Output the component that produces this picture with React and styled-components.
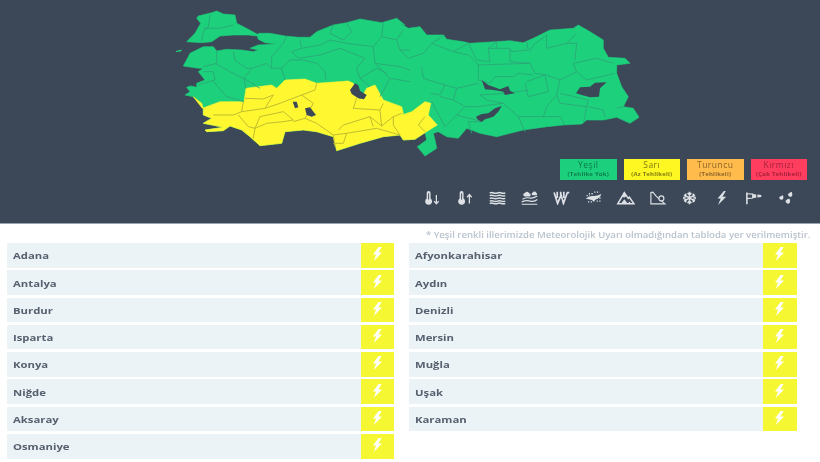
import styled, { createGlobalStyle } from "styled-components";

const GlobalStyle = createGlobalStyle`
  html, body {
    margin: 0;
    padding: 0;
    background: #fff;
    font-family: "Open Sans", "Liberation Sans", sans-serif;
  }
`;

const Page = styled.div`
  width: 820px;
  height: 462px;
  overflow: hidden;
  background: #fff;
`;

const Header = styled.header`
  height: 223px;
  background: #3c4858;
  border-bottom: 1px solid #9aa3ad;
  display: flex;
  flex-direction: column;
`;

const MapSvg = styled.svg`
  display: block;
  width: 820px;
  height: 157px;
  flex: none;
  filter: blur(0.45px);
`;

const Legend = styled.div`
  display: flex;
  justify-content: flex-end;
  gap: 7px;
  margin-top: 2px;
  padding-right: 13px;
`;

const LegendBox = styled.div`
  width: 56.5px;
  height: 20.5px;
  background: ${(p) => p.$bg};
  color: ${(p) => p.$fg};
  text-align: center;
  filter: blur(0.25px);
  b {
    display: block;
    font-weight: 400;
    font-size: 8.5px;
    letter-spacing: 0.5px;
  }
  small {
    display: block;
    font-weight: 700;
    font-size: 6px;
    letter-spacing: 0.2px;
  }
`;

const IconBar = styled.div`
  display: flex;
  justify-content: flex-end;
  margin-top: 11px;
  padding-right: 18px;
`;

const IconSlot = styled.div`
  width: 32.1px;
  height: 14px;
  display: flex;
  justify-content: center;
  color: #dde1e5;
  filter: blur(0.45px);
  svg {
    width: 19px;
    height: 14px;
    display: block;
  }
`;

const Main = styled.main`
  padding: 5px 0 0 6.5px;
`;

const Note = styled.div`
  width: 803.5px;
  text-align: right;
  font-size: 8.6px;
  line-height: 12px;
  height: 12px;
  color: #b9c3cd;
  font-weight: 600;
  margin-bottom: 2px;
  white-space: nowrap;
  transform: scaleX(1.113);
  transform-origin: right center;
  filter: blur(0.3px);
`;

const Columns = styled.div`
  display: grid;
  grid-template-columns: 387.5px 388px;
  column-gap: 14.5px;
  align-items: start;
`;

const Column = styled.div`
  display: flex;
  flex-direction: column;
  gap: 2.8px;
`;

const Row = styled.div`
  height: 24.5px;
  display: flex;
`;

const CityCell = styled.div`
  flex: 1;
  display: flex;
  align-items: center;
  background: #ebf3f7;
  padding-left: 6.5px;
`;

const CityName = styled.span`
  display: block;
  color: #56606f;
  font-size: 9.5px;
  font-weight: 700;
  margin-top: 1px;
  transform: scaleX(1.19);
  transform-origin: left center;
  filter: blur(0.25px);
`;

const WarnCell = styled.div`
  width: 33.5px;
  background: #f6f733;
  display: flex;
  align-items: center;
  justify-content: center;
  color: #fff;
  svg {
    width: 11px;
    height: 14px;
    display: block;
    margin-top: -2px;
  }
`;

const Bolt = () => (
  <svg viewBox="0 0 11 14">
    <path fill="currentColor" d="M6.6 0L1 7.6h3.1L1.8 14 10 5.6H6.4L9.6 0z" />
  </svg>
);

const icon = (children) => (
  <svg viewBox="0 0 24 18" fill="none" stroke="currentColor" strokeWidth="1.6">
    {children}
  </svg>
);

const Thermo = () => (
  <path
    fill="currentColor"
    stroke="none"
    d="M4.500 2.500a2.500 2.500 0 0 1 5 0v7.300a4.400 4.400 0 1 1-5 0z"
  />
);

const icons = [
  icon(
    <>
      <Thermo />
      <path d="M7 3v8" stroke="#3c4858" strokeWidth="1.200" />
      <path d="M17 5v11M14 13l3 3.500 3-3.500" />
    </>
  ),
  icon(
    <>
      <Thermo />
      <path d="M7 3v8" stroke="#3c4858" strokeWidth="1.200" />
      <path d="M17 16V5M14 8l3-3.500L20 8" />
    </>
  ),
  icon(
    <path
      strokeWidth="1.900"
      d="M2 2.500q2.500-1 5 0t5 0 5 0 5 0M2 6q2.500-1 5 0t5 0 5 0 5 0M2 9.500q2.500-1 5 0t5 0 5 0 5 0M2 13q2.500-1 5 0t5 0 5 0 5 0M2 16q2.500-1 5 0t5 0 5 0 5 0"
    />
  ),
  icon(
    <>
      <path strokeWidth="1.500" d="M2 17h20M2 14q6-2.500 11-1t9-2M3 10.500q5-2.500 9-1.500t10-2.500" />
      <path
        fill="currentColor"
        stroke="none"
        d="M6 7a2.200 2.200 0 0 1 .3-4.400 2.800 2.800 0 0 1 5.200 .4 2 2 0 0 1 0 4zM16 5.500a1.800 1.800 0 0 1 .3-3.500 2.200 2.200 0 0 1 4.200 .2 1.700 1.700 0 0 1 0 3.300z"
      />
    </>
  ),
  icon(
    <path
      strokeWidth="2.200"
      d="M2.500 2l4.500 14 4.500-11 3 11 5-14M6.500 1v8M11 1v4M15 1v8M22 2h-3"
    />
  ),
  icon(
    <>
      <path
        fill="currentColor"
        stroke="none"
        d="M2 10q4-4 9-3.500 5 .5 11-2.500-1 4.500-6.500 6.500-2 1-3 3.500-1-2-3-2.500-3-1-7.500-1.500z"
      />
      <path
        strokeWidth="1.700"
        strokeDasharray="1.600 1.800"
        d="M6 3.500h5M13 1.500h7M3 6h4M16 9h6M5 14h5M16 13h5"
      />
    </>
  ),
  icon(
    <>
      <path d="M2 16.500L10.500 2l5 7.500 1.500-1.500 6 8.500z" strokeWidth="1.900" />
      <path fill="currentColor" stroke="none" d="M10.500 2l3 4.500-3 2-3-1zM6 16.500l4.500-6 4.500 6zM15 16.500l2-3 2.500 3z" />
    </>
  ),
  icon(
    <>
      <path d="M3.500 2v14.500h18L10.500 7 6 1.500z" strokeWidth="1.500" />
      <circle cx="17" cy="9.500" r="3.200" strokeWidth="1.500" fill="#3c4858" />
    </>
  ),
  icon(
    <path
      strokeWidth="1.900"
      d="M12 1v16M5 5l14 8M19 5L5 13M9.500 2.500L12 5l2.500-2.500M9.500 15.500L12 13l2.500 2.500M4 8.500L7.500 7 7 3.500M20 9.500L16.500 11l.5 3.500M20 8.500L16.500 7l.5-3.500M4 9.500L7.500 11 7 14.500"
    />
  ),
  icon(
    <path fill="currentColor" stroke="none" d="M15 0L7 9.500h4L7.500 18 18 7.500h-4.800L17.500 0z" />
  ),
  icon(
    <>
      <path d="M3.500 2v15" strokeWidth="2" />
      <path d="M3.500 3.500L11 4v5l-7.500.8" strokeWidth="1.500" />
      <path fill="currentColor" stroke="none" d="M11 4l4.500.4v4.200L11 9zM17 4.600l5 .5v2.700l-5 .6z" />
    </>
  ),
  icon(
    <path
      fill="currentColor"
      stroke="none"
      d="M20 1q1.500 3.500 .5 5.500a3 3 0 0 1-5.200-2.500q.7-1.500 4.700-3zM8.500 5.500q1.500 2.500 .5 4.500a2.800 2.800 0 0 1-5-1q-.5-1.500 4.500-3.500zM17 9.500q1.500 3 .5 5.500a3 3 0 0 1-5.300-2.500q.8-1.700 4.800-3z"
    />
  ),
];

const levels = [
  { name: "Yeşil", desc: "(Tehlike Yok)", bg: "#1ccf7c", fg: "#0d7d4b" },
  { name: "Sarı", desc: "(Az Tehlikeli)", bg: "#fff722", fg: "#7d7a12" },
  { name: "Turuncu", desc: "(Tehlikeli)", bg: "#ffbb4c", fg: "#8a6428" },
  { name: "Kırmızı", desc: "(Çok Tehlikeli)", bg: "#ff3d5e", fg: "#a51f3c" },
];

const leftCities = ["Adana", "Antalya", "Burdur", "Isparta", "Konya", "Niğde", "Aksaray", "Osmaniye"];
const rightCities = ["Afyonkarahisar", "Aydın", "Denizli", "Mersin", "Muğla", "Uşak", "Karaman"];

const DARK = "#3c4858";

// the map was traced from two crops, so points are "crop x, crop y" at 3x
const west = (pts) => pts.map(([x, y]) => `${(170 + x / 3).toFixed(1)},${(y / 3).toFixed(1)}`).join(" ");
const east = (pts) => pts.map(([x, y]) => `${(400 + x / 3).toFixed(1)},${(y / 3).toFixed(1)}`).join(" ");

const northWest = [
  [85, 48], [125, 38], [140, 33], [160, 42], [195, 45], [200, 70], [235, 88], [262, 103],
  [268, 100], [300, 100], [345, 108], [385, 112], [420, 112], [440, 95], [490, 75], [530, 68],
  [570, 57], [635, 68], [680, 55], [705, 75],
];
const northEast = [
  [0, 70], [25, 85], [60, 80], [80, 105], [130, 105], [140, 118], [190, 125], [210, 130],
  [285, 125], [330, 122], [370, 128], [400, 115], [450, 90], [520, 85], [535, 75], [570, 95],
  [610, 120], [610, 145], [625, 172], [675, 175], [690, 190], [650, 195], [650, 220], [665, 260],
  [685, 290], [670, 320], [700, 325], [717, 352], [690, 370], [650, 352], [610, 360], [560, 360],
  [545, 372], [490, 375], [440, 380], [370, 390], [290, 410], [240, 400], [200, 385], [175, 415],
  [140, 410], [115, 395], [100, 400], [105, 420], [110, 445], [75, 468], [52, 440], [80, 420],
  [75, 398], [45, 418], [10, 420],
];
const southWest = [
  [690, 405], [640, 410], [570, 430], [500, 452], [490, 410], [440, 395], [400, 390], [345, 395],
  [335, 430], [270, 437], [240, 410], [215, 390], [180, 378], [160, 392], [110, 395], [105, 390],
  [160, 382], [100, 370], [125, 355], [100, 345], [100, 325], [95, 310], [70, 290], [45, 285],
  [60, 275], [50, 262], [62, 258], [80, 262], [80, 250], [105, 240], [85, 215], [100, 205],
  [85, 205], [40, 198], [55, 170], [60, 160], [100, 140], [130, 140], [140, 153], [170, 148],
  [215, 150], [250, 155], [265, 150], [240, 145], [265, 135], [320, 132], [285, 128], [265, 118],
  [262, 108], [235, 105], [190, 105], [150, 108], [125, 125], [95, 128], [50, 125], [75, 100],
  [92, 70], [80, 55],
];
const turkey = `${west(northWest)} ${east(northEast)} ${west(southWest)}`;

const yellowTop = [
  [97, 325], [150, 305], [222, 305], [228, 265], [305, 255], [320, 265], [345, 240], [405, 237],
  [440, 250], [535, 243], [550, 250], [570, 300], [590, 265], [615, 255], [640, 300], [695, 320],
  [700, 340],
];
const yellowEast = [
  [5, 345], [35, 335], [75, 305], [92, 310], [85, 345], [112, 375], [75, 398], [45, 418], [10, 420],
];
const yellowArea = `${west(yellowTop)} ${east(yellowEast)} ${west(southWest.slice(0, 23))}`;

const lakes = [
  east([[528, 280], [540, 262], [570, 260], [585, 248], [620, 247], [600, 265], [597, 290], [570, 292], [545, 285]]),
  east([[245, 240], [265, 255], [300, 268], [325, 258], [330, 272], [345, 280], [315, 285], [310, 275], [280, 270], [255, 268]]),
  east([[228, 350], [245, 342], [265, 340], [285, 325], [305, 318], [295, 335], [280, 350], [255, 358], [245, 366], [232, 358]]),
  west([[405, 325], [420, 322], [438, 345], [425, 350], [410, 345]]),
  west([[368, 305], [380, 305], [385, 322], [375, 325]]),
  west([[540, 270], [555, 250], [565, 255], [570, 272], [590, 285], [582, 298], [565, 295], [545, 282]]),
];

const greenWestLines =
  "M120 45L115 80L100 95L95 125M100 85L150 85L190 75M140 150L140 190L100 200M135 190L180 215L220 235M190 155L195 180L230 205L245 205L290 190L305 205M305 205L305 170L340 130L350 108M305 205L335 205L360 180L400 180L440 190L465 215L468 240M335 205L345 240M245 205L222 235L228 265M100 215L130 215L135 240L85 255M130 245L170 290L222 305M222 235L270 265M365 155L385 175L450 165L510 145L585 175L560 205L570 235L600 260M365 155L395 145L390 120M395 145L450 135L480 120L530 130L610 140L615 190L690 200L720 210M490 75L480 100L520 120L545 95L530 70M610 140L635 110L640 70M635 110L680 120L700 90M680 120L690 150L720 150M615 190L660 235L630 290M570 235L620 205L650 220M660 235L720 245";

const yellowLines =
  "M225 295L280 297L310 285L285 325M220 305L215 335L190 345L130 345M205 345L235 380L255 385L270 350L340 335L370 360L340 365L290 370L255 385M215 335L285 325L330 310L395 285L435 270L440 250M395 285L430 310L405 355L370 365M405 355L440 370L490 405L530 400L620 385L690 405M255 385L250 415M490 405L495 440M490 430L520 430L530 400M505 390L520 375L600 350L610 380M600 350L635 378L630 330L550 325L560 295M630 330L640 310M635 378L670 350L695 340M670 350L670 375L690 405";

const greenEastLines =
  "M0 150L25 175L70 160L95 130L135 105M95 130L160 155L205 130M160 155L205 165L235 195M205 130L230 180L270 185L265 145L290 125M265 145L330 145L335 155L385 150L380 125M290 125L290 145M330 150L330 185L390 190L405 220L440 225L480 240L530 215L520 190L590 175L640 190M390 155L400 135L440 105L440 145L500 130L530 100M500 130L530 130L525 180M530 215L560 240L645 220M235 195L235 240L270 250L285 230L340 230L355 220L400 225M235 195L390 190M65 200L70 235L135 255L120 285L92 280M135 255L170 265L235 250M170 265L160 300L195 320L230 320L310 310L355 350L430 350L440 320L470 285L480 240M120 290L160 300M170 345L195 320M95 305L135 380L170 345L245 365L205 365L215 400M355 350L375 395M430 350L480 350L495 375M470 285L480 310L560 320L565 300L480 280M565 320L610 330L615 352M560 320L550 370M380 245L435 225L445 275L385 290L375 250M240 285L320 280L385 270M240 285L260 300L310 310M650 325L670 320";

const eastYellowLine = "M75 350L55 375L75 395";

const TurkeyMap = () => (
  <MapSvg viewBox="0 0 820 157">
    <polygon points={turkey} fill="#1dd07c" stroke="#1dd07c" strokeWidth="0.6" strokeLinejoin="round" />
    <path d="M176 51l6-1.500-1 2-5 .5z" fill="#1dd07c" />
    <polygon points={yellowArea} fill="#fff730" stroke="#fff730" strokeWidth="0.6" strokeLinejoin="round" />
    <g transform="translate(170 0) scale(0.3333)" fill="none" strokeWidth="2.700" strokeLinejoin="round">
      <path d={greenWestLines} stroke="#2aa877" />
      <path d={yellowLines} stroke="#b9b72f" />
    </g>
    <g transform="translate(400 0) scale(0.3333)" fill="none" strokeWidth="2.700" strokeLinejoin="round">
      <path d={greenEastLines} stroke="#2aa877" />
      <path d={eastYellowLine} stroke="#b9b72f" />
    </g>
    {lakes.map((pts) => (
      <polygon key={pts} points={pts} fill={DARK} />
    ))}
  </MapSvg>
);

const CityColumn = ({ cities }) => (
  <Column>
    {cities.map((city) => (
      <Row key={city}>
        <CityCell>
          <CityName>{city}</CityName>
        </CityCell>
        <WarnCell>
          <Bolt />
        </WarnCell>
      </Row>
    ))}
  </Column>
);

export default function App() {
  return (
    <Page>
      <GlobalStyle />
      <Header>
        <TurkeyMap />
        <Legend>
          {levels.map((l) => (
            <LegendBox key={l.name} $bg={l.bg} $fg={l.fg}>
              <b>{l.name}</b>
              <small>{l.desc}</small>
            </LegendBox>
          ))}
        </Legend>
        <IconBar>
          {icons.map((ic, i) => (
            <IconSlot key={i}>{ic}</IconSlot>
          ))}
        </IconBar>
      </Header>
      <Main>
        <Note>* Yeşil renkli illerimizde Meteorolojik Uyarı olmadığından tabloda yer verilmemiştir.</Note>
        <Columns>
          <CityColumn cities={leftCities} />
          <CityColumn cities={rightCities} />
        </Columns>
      </Main>
    </Page>
  );
}
